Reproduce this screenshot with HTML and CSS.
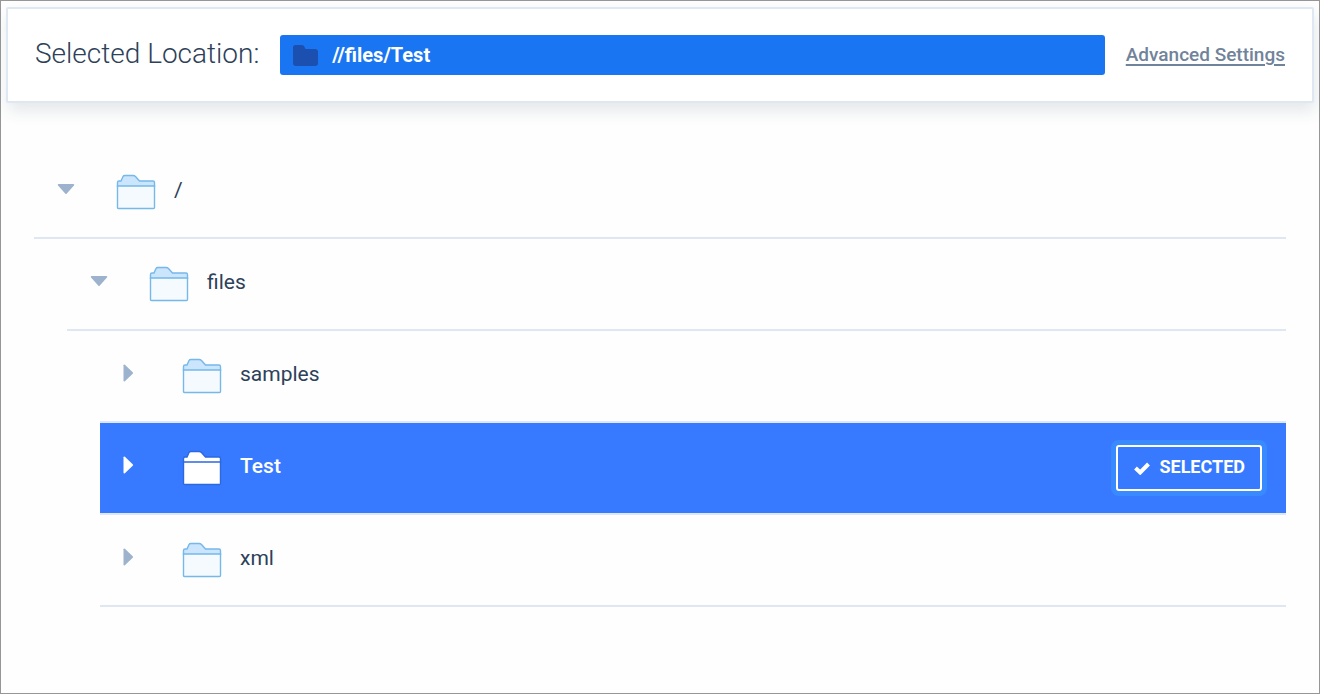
FILE: index.html
```html
<!DOCTYPE html>
<html lang="en">
<head>
<meta charset="utf-8">
<title>Select Location</title>
<link rel="stylesheet" href="styles.css">
</head>
<body>
<svg class="defs" aria-hidden="true">
  <symbol id="folder" viewBox="0 0 40 36">
    <path class="folder-back" d="M1.5 13V8.5Q1.5 7 3 7H5L7 2.5Q7.500 1.500 9 1.500H17Q18.500 1.500 19.500 2.500L23.500 7H37Q38.500 7 38.500 8.500V13"/>
    <path class="folder-front" d="M1.500 12H38.500V33.500Q38.500 34.500 37.500 34.500H2.500Q1.500 34.500 1.500 33.500Z"/>
  </symbol>
  <symbol id="down" viewBox="0 0 18 11"><path d="M1.500 0H16.500Q18 .5 17 1.500L9.800 9.500Q9 10.500 8.200 9.500L1 1.500Q0 .5 1.500 0Z"/></symbol>
  <symbol id="right" viewBox="0 0 11 18"><path d="M.5 1.200Q.8-.1 1.900.7L9.700 8.200Q10.500 9 9.700 9.800L1.900 17.300Q.8 18.100.5 16.800Z"/></symbol>
</svg>
<div class="window">
  <header class="location-bar">
    <h1 class="location-title">Selected Location:</h1>
    <div class="location-path">
      <svg class="path-icon" viewBox="0 0 25 21" aria-hidden="true"><path d="M2.500 0H9Q10.500 0 11.300 1.500L12.500 4H22Q25 4 25 7V18Q25 21 22 21H3Q0 21 0 18V2.500Q0 0 2.500 0Z"/></svg>
      <span>//files/Test</span>
    </div>
    <a class="advanced-link" href="#">Advanced Settings</a>
  </header>
  <main class="browser">
    <ul class="tree">
      <li>
        <div class="row">
          <button class="toggle" aria-label="Collapse root" aria-expanded="true"><svg class="caret-down"><use href="#down"/></svg></button>
          <svg class="folder"><use href="#folder"/></svg>
          <span class="name">/</span>
        </div>
        <ul class="branch">
          <li>
            <div class="row">
              <button class="toggle" aria-label="Collapse files" aria-expanded="true"><svg class="caret-down"><use href="#down"/></svg></button>
              <svg class="folder"><use href="#folder"/></svg>
              <span class="name">files</span>
            </div>
            <ul class="branch">
              <li>
                <div class="row">
                  <button class="toggle" aria-label="Expand samples" aria-expanded="false"><svg class="caret-right"><use href="#right"/></svg></button>
                  <svg class="folder"><use href="#folder"/></svg>
                  <span class="name">samples</span>
                </div>
              </li>
              <li>
                <div class="row row-selected">
                  <button class="toggle" aria-label="Expand Test" aria-expanded="false"><svg class="caret-right"><use href="#right"/></svg></button>
                  <svg class="folder"><use href="#folder"/></svg>
                  <span class="name">Test</span>
                  <button class="selected-button"><svg class="check" viewBox="0 0 16 13" aria-hidden="true"><path d="M1.500 6L6.200 10.500L14.500 2"/></svg>SELECTED</button>
                </div>
              </li>
              <li>
                <div class="row">
                  <button class="toggle" aria-label="Expand xml" aria-expanded="false"><svg class="caret-right"><use href="#right"/></svg></button>
                  <svg class="folder"><use href="#folder"/></svg>
                  <span class="name">xml</span>
                </div>
              </li>
            </ul>
          </li>
        </ul>
      </li>
    </ul>
  </main>
</div>
</body>
</html>
```
FILE: styles.css
```css
* { box-sizing: border-box; }

body {
  margin: 0;
  background: #fefefe;
  color: #2d4159;
  font-family: Roboto, "Liberation Sans", sans-serif;
}

.defs { position: absolute; width: 0; height: 0; }

.window {
  min-height: 100vh;
  padding: 6px 5px;
  border: 1px solid #969696;
}

.location-bar {
  display: flex;
  align-items: center;
  gap: 21px;
  padding: 26px 27px;
  border: 2px solid #dfe8f2;
  border-radius: 2px;
  background: #fff;
  box-shadow: 2px 8px 16px rgba(45, 65, 89, 0.12);
}

.location-title {
  margin: 0;
  padding-bottom: 2px;
  font-size: 28px;
  font-weight: 300;
  line-height: 36px;
  white-space: nowrap;
}

.location-path {
  display: flex;
  flex: 1;
  align-items: center;
  gap: 14px;
  height: 40px;
  padding: 0 13px;
  border-radius: 3px;
  background: #1a75f2;
  color: #fff;
  font-size: 20px;
  font-weight: 700;
}

.path-icon { width: 25px; height: 21px; fill: #1b4fb0; }

.advanced-link {
  color: #71839a;
  font-size: 19px;
  font-weight: 500;
  line-height: 24px;
  text-underline-offset: 3px;
  text-decoration-thickness: 2px;
  white-space: nowrap;
}

.browser { padding: 44px 28px 0; }

.tree, .branch { margin: 0; padding: 0; list-style: none; }

.branch { padding-left: 33px; }

.row {
  display: flex;
  align-items: center;
  height: 92px;
  border-bottom: 2px solid #dfe8f2;
}

.toggle {
  width: 82px;
  height: 40px;
  padding: 0 0 6px 23px;
  border: 0;
  background: none;
  color: #9db3cd;
  text-align: left;
}

.toggle svg { display: block; fill: currentColor; }
.caret-down { width: 18px; height: 11px; }
.caret-right { width: 11px; height: 18px; }

.folder {
  --back: #cae5fc;
  --front: #f5fafe;
  --outline: #76b8ea;
  width: 40px;
  height: 36px;
}

.folder-back { fill: var(--back); stroke: var(--outline); stroke-width: 1.4; }
.folder-front { fill: var(--front); stroke: var(--outline); stroke-width: 1.4; }

.name {
  margin-left: 18px;
  padding-bottom: 4px;
  font-size: 21px;
  line-height: 28px;
}

.row-selected {
  padding-right: 24px;
  background: #377aff;
  background-clip: padding-box;
  color: #fff;
}

.row-selected .toggle { color: #fff; }
.row-selected .folder { --back: #fff; --front: #fff; --outline: #2c68e0; }
.row-selected .name { font-weight: 500; }

.selected-button {
  display: flex;
  align-items: center;
  gap: 9px;
  height: 46px;
  margin-left: auto;
  padding: 0 15px 2px 16px;
  border: 2px solid #fff;
  border-radius: 3px;
  background: #377aff;
  box-shadow: 0 0 0 5px #3989ff;
  color: #fff;
  font: 700 18px/24px Roboto, "Liberation Sans", sans-serif;
}

.check { width: 16px; height: 13px; margin-top: 2px; fill: none; stroke: #fff; stroke-width: 4; }
```
